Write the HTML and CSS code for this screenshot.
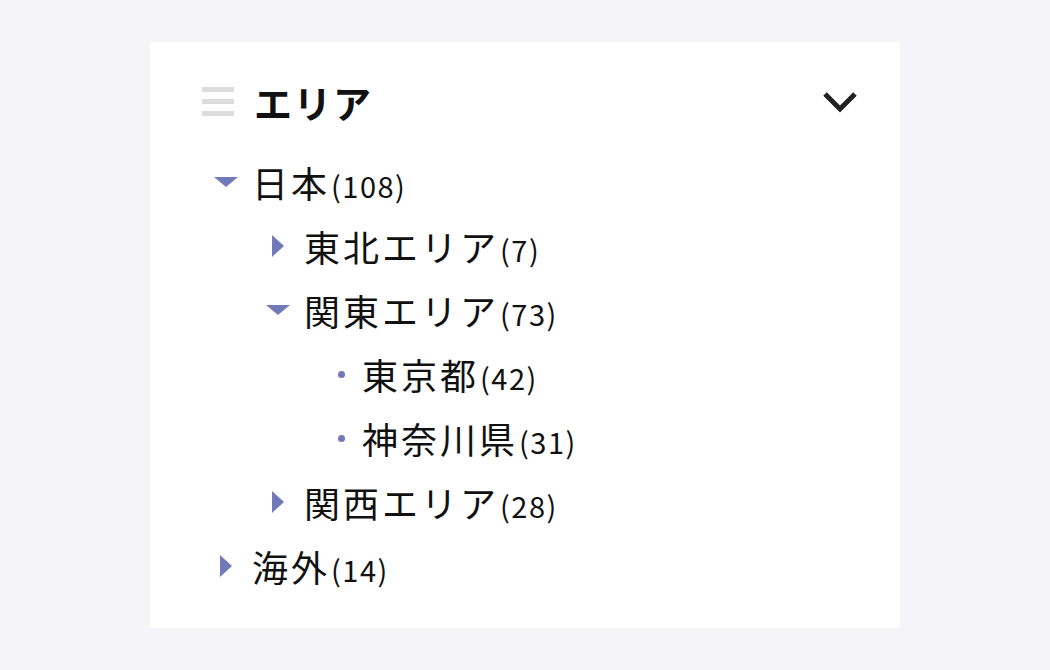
FILE: index.html
```html
<!DOCTYPE html>
<html lang="ja">
<head>
<meta charset="utf-8">
<link rel="stylesheet" href="styles.css">
</head>
<body>
<div class="card">
  <div class="header">
    <svg class="drag" width="32" height="30" viewBox="0 0 32 30"><rect x="0" y="0" width="32" height="5" fill="#dcdcdc"/><rect x="0" y="12" width="32" height="5" fill="#dcdcdc"/><rect x="0" y="24" width="32" height="5" fill="#dcdcdc"/></svg>
    <h2 class="title">エリア</h2>
    <svg class="chev" width="36" height="22" viewBox="0 0 36 22"><path d="M3 3 L18 18 L33 3" fill="none" stroke="#222" stroke-width="5"/></svg>
  </div>
  <ul class="tree lv0">
    <li>
      <div class="row"><span class="tw down"></span><span class="lb">日本</span><span class="ct">(108)</span></div>
      <ul class="tree lv1">
        <li><div class="row"><span class="tw right"></span><span class="lb">東北エリア</span><span class="ct">(7)</span></div></li>
        <li>
          <div class="row"><span class="tw down"></span><span class="lb">関東エリア</span><span class="ct">(73)</span></div>
          <ul class="tree lv2">
            <li><div class="row"><span class="tw dot"></span><span class="lb">東京都</span><span class="ct">(42)</span></div></li>
            <li><div class="row"><span class="tw dot"></span><span class="lb">神奈川県</span><span class="ct">(31)</span></div></li>
          </ul>
        </li>
        <li><div class="row"><span class="tw right"></span><span class="lb">関西エリア</span><span class="ct">(28)</span></div></li>
      </ul>
    </li>
    <li><div class="row"><span class="tw right"></span><span class="lb">海外</span><span class="ct">(14)</span></div></li>
  </ul>
</div>
</body>
</html>
```
FILE: styles.css
```css
html, body { margin: 0; padding: 0; }
body {
  background: #f5f5f9;
  font-family: "Noto Sans CJK JP", "Noto Sans", sans-serif;
  color: #111;
  width: 1050px;
  height: 670px;
  overflow: hidden;
}
.card {
  margin: 42px 0 0 150px;
  width: 750px;
  height: 586px;
  background: #fff;
  box-sizing: border-box;
  padding: 36px 42px 0 52px;
}
.header {
  display: flex;
  align-items: center;
  height: 48px;
}
.drag { margin-right: 20px; }
.title {
  margin: 0;
  font-size: 38px;
  font-weight: 700;
  flex: 1;
  line-height: 48px;
  letter-spacing: 1.5px;
}
.tree { list-style: none; margin: 0; padding: 0; }
.lv0 { margin-top: 24px; }
.lv1 { padding-left: 52px; }
.lv2 { padding-left: 66px; }
.row {
  display: flex;
  align-items: baseline;
  height: 64px;
  line-height: 64px;
}
.tw {
  width: 50px;
  align-self: center;
  display: flex;
  justify-content: center;
  align-items: center;
  height: 24px;
}
.tw.down::before {
  content: "";
  border-left: 12px solid transparent;
  border-right: 12px solid transparent;
  border-top: 10px solid #7279b8;
  margin-right: 2px;
}
.tw.right::before {
  content: "";
  border-top: 11px solid transparent;
  border-bottom: 11px solid transparent;
  border-left: 12px solid #7279b8;
  margin-right: 2px;
}
.tw.dot::before {
  content: "";
  width: 7px;
  height: 7px;
  border-radius: 50%;
  background: #7279b8;
}
.lv2 .tw { width: 42px; }
.lb { font-size: 36px; letter-spacing: 3px; }
.ct { font-size: 29px; letter-spacing: 1.5px; margin-left: 1px; }
```
